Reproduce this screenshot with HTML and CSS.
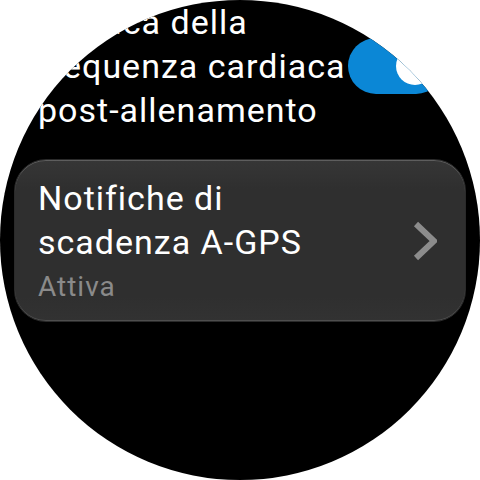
FILE: index.html
```html
<!DOCTYPE html>
<html lang="it">
<head>
<meta charset="utf-8">
<link rel="stylesheet" href="styles.css">
</head>
<body>
<div class="watch">
  <div class="row">
    <div class="row-text">Verifica della<br>frequenza cardiaca<br>post-allenamento</div>
    <div class="toggle"><div class="knob"></div></div>
  </div>
  <div class="card">
    <div class="card-text">
      <div class="card-title">Notifiche di scadenza A-GPS</div>
      <div class="card-sub">Attiva</div>
    </div>
    <svg class="chevron" width="24" height="40" viewBox="0 0 24 40">
      <path d="M3 3 L21 20 L3 37" fill="none" stroke="#8c8c8c" stroke-width="6"/>
    </svg>
  </div>
</div>
</body>
</html>
```
FILE: styles.css
```css
html, body {
  margin: 0;
  padding: 0;
  background: #fff;
}
.watch {
  width: 480px;
  height: 480px;
  border-radius: 50%;
  overflow: hidden;
  background: #000;
  font-family: Roboto, "Liberation Sans", sans-serif;
  color: #fff;
}
.row {
  display: flex;
  align-items: center;
  padding: 0 36px 0 38px;
}
.row-text {
  flex: 1;
  min-width: 0;
  white-space: nowrap;
  font-size: 34px;
  line-height: 44px;
  letter-spacing: 1px;
}
.toggle {
  flex: none;
  width: 96px;
  height: 56px;
  border-radius: 28px;
  background: #0b87d6;
  display: flex;
  align-items: center;
  justify-content: flex-end;
  padding-right: 10px;
  box-sizing: border-box;
}
.knob {
  width: 38px;
  height: 38px;
  border-radius: 50%;
  background: #fff;
}
.card {
  margin: 27px 14px 0 14px;
  border-radius: 32px;
  background: linear-gradient(#363636, #2f2f2f 18%, #2f2f2f 85%, #323232);
  border: 1px solid #2a2a2a;
  box-shadow: inset 0 1px 0 rgba(255,255,255,0.2), inset 0 -1px 0 rgba(255,255,255,0.14);
  padding: 16px 28px 16px 23px;
  display: flex;
  align-items: center;
  justify-content: space-between;
}
.card-text {
  max-width: 300px;
}
.card-title {
  font-size: 34px;
  line-height: 44px;
  letter-spacing: 1px;
}
.card-sub {
  margin-top: 5px;
  font-size: 28px;
  line-height: 36px;
  letter-spacing: 1px;
  color: #8a8a8a;
}
.chevron {
  flex: none;
  display: block;
}
```
